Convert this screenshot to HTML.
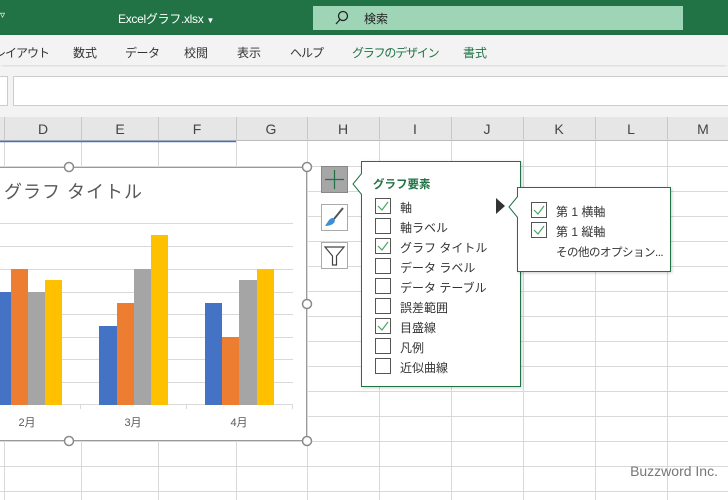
<!DOCTYPE html>
<html><head><meta charset="utf-8"><style>
*{margin:0;padding:0;box-sizing:border-box}
body{width:728px;height:500px;overflow:hidden;position:relative;background:#fff;font-family:"Liberation Sans","Noto Sans CJK JP",sans-serif}
.a{position:absolute}
.t{font-size:12px;color:#333;white-space:nowrap}
.r{font-size:12px;color:#333;white-space:nowrap;position:absolute;top:44px}
.cb{position:absolute;width:16px;height:16px;border:1px solid #555;background:#fff}
</style></head><body>
<div class="a" style="left:0;top:0;width:728px;height:35px;background:#217346"></div>
<div class="a t" style="left:0;top:10px;color:#fff;font-size:10px">▿</div>
<div class="a t" style="left:118px;top:10px;color:#fff;font-size:12px;letter-spacing:-0.3px">Excelグラフ.xlsx <span style="font-size:8px">▼</span></div>
<div class="a" style="left:313px;top:6px;width:370px;height:24px;background:#9fd5b7"></div>
<svg class="a" style="left:335px;top:10px" width="14" height="16"><circle cx="8" cy="6" r="4.5" fill="none" stroke="#222" stroke-width="1.3"/><line x1="5" y1="9.5" x2="1" y2="14" stroke="#222" stroke-width="1.3"/></svg>
<div class="a t" style="left:364px;top:10px;font-size:12px;color:#222">検索</div>
<div class="a" style="left:0;top:35px;width:728px;height:30px;background:#f3f3f3;box-shadow:0 2px 4px rgba(0,0,0,.15)"></div>
<div class="r" style="left:-6px;letter-spacing:-1px">レイアウト</div>
<div class="r" style="left:73px">数式</div>
<div class="r" style="left:125px;letter-spacing:-0.5px">データ</div>
<div class="r" style="left:184px">校閲</div>
<div class="r" style="left:237px">表示</div>
<div class="r" style="left:290px;letter-spacing:-1px">ヘルプ</div>
<div class="r" style="left:352px;color:#217346;letter-spacing:-1.2px">グラフのデザイン</div>
<div class="r" style="left:463px;color:#217346">書式</div>
<div class="a" style="left:0;top:67px;width:728px;height:50px;background:#f3f3f3"></div>
<div class="a" style="left:-2px;top:76px;width:10px;height:30px;background:#fff;border:1px solid #ccc"></div>
<div class="a" style="left:13px;top:76px;width:720px;height:30px;background:#fff;border:1px solid #ccc"></div>
<div class="a" style="left:0;top:117px;width:728px;height:24px;background:#e6e6e6;border-bottom:1px solid #bbb"></div>
<svg class="a" style="left:0;top:117px" width="728" height="383">
<g stroke="#c8c8c8" stroke-width="1">
<line x1="4.5" y1="0" x2="4.5" y2="24"/><line x1="81.5" y1="0" x2="81.5" y2="24"/><line x1="158.5" y1="0" x2="158.5" y2="24"/><line x1="236.5" y1="0" x2="236.5" y2="24"/><line x1="307.5" y1="0" x2="307.5" y2="24"/><line x1="379.5" y1="0" x2="379.5" y2="24"/><line x1="451.5" y1="0" x2="451.5" y2="24"/><line x1="523.5" y1="0" x2="523.5" y2="24"/><line x1="595.5" y1="0" x2="595.5" y2="24"/><line x1="667.5" y1="0" x2="667.5" y2="24"/>
</g>
<g stroke="#d9d9d9" stroke-width="1">
<line x1="4.5" y1="24" x2="4.5" y2="383"/><line x1="81.5" y1="24" x2="81.5" y2="383"/><line x1="158.5" y1="24" x2="158.5" y2="383"/><line x1="236.5" y1="24" x2="236.5" y2="383"/><line x1="307.5" y1="24" x2="307.5" y2="383"/><line x1="379.5" y1="24" x2="379.5" y2="383"/><line x1="451.5" y1="24" x2="451.5" y2="383"/><line x1="523.5" y1="24" x2="523.5" y2="383"/><line x1="595.5" y1="24" x2="595.5" y2="383"/><line x1="667.5" y1="24" x2="667.5" y2="383"/>
<line x1="0" y1="49.5" x2="728" y2="49.5"/><line x1="0" y1="74.5" x2="728" y2="74.5"/><line x1="0" y1="99.5" x2="728" y2="99.5"/><line x1="0" y1="124.5" x2="728" y2="124.5"/><line x1="0" y1="149.5" x2="728" y2="149.5"/><line x1="0" y1="174.5" x2="728" y2="174.5"/><line x1="0" y1="199.5" x2="728" y2="199.5"/><line x1="0" y1="224.5" x2="728" y2="224.5"/><line x1="0" y1="249.5" x2="728" y2="249.5"/><line x1="0" y1="274.5" x2="728" y2="274.5"/><line x1="0" y1="299.5" x2="728" y2="299.5"/><line x1="0" y1="324.5" x2="728" y2="324.5"/><line x1="0" y1="349.5" x2="728" y2="349.5"/><line x1="0" y1="374.5" x2="728" y2="374.5"/>
</g>
<line x1="0" y1="24.5" x2="236" y2="24.5" stroke="#4472c4" stroke-width="1.5"/>
<g font-family="Liberation Sans" font-size="14" fill="#444" text-anchor="middle">
<text x="43" y="17">D</text><text x="120" y="17">E</text><text x="197" y="17">F</text><text x="271" y="17">G</text><text x="343" y="17">H</text><text x="415" y="17">I</text><text x="487" y="17">J</text><text x="559" y="17">K</text><text x="631" y="17">L</text><text x="703" y="17">M</text>
</g>
</svg>
<div class="a" style="left:-5px;top:167px;width:312px;height:274px;background:#fff;border:1px solid #9a9a9a"></div>
<div class="a" style="left:4px;top:178px;font-size:18px;color:#595959;letter-spacing:1px">グラフ タイトル</div>
<svg class="a" style="left:0;top:160px" width="310" height="290">
<g stroke="#d9d9d9"><line x1="0" y1="63.5" x2="293" y2="63.5"/><line x1="0" y1="86.5" x2="293" y2="86.5"/><line x1="0" y1="109.5" x2="293" y2="109.5"/><line x1="0" y1="132.5" x2="293" y2="132.5"/><line x1="0" y1="154.5" x2="293" y2="154.5"/><line x1="0" y1="177.5" x2="293" y2="177.5"/><line x1="0" y1="199.5" x2="293" y2="199.5"/><line x1="0" y1="222.5" x2="293" y2="222.5"/><line x1="0" y1="244.5" x2="293" y2="244.5"/>
<line x1="80.5" y1="244" x2="80.5" y2="249"/><line x1="186.5" y1="244" x2="186.5" y2="249"/><line x1="292.5" y1="244" x2="292.5" y2="249"/></g>
<rect x="0" y="132" width="11" height="113" fill="#4472c4"/><rect x="11" y="109" width="17" height="136" fill="#ed7d31"/><rect x="28" y="132" width="17" height="113" fill="#a5a5a5"/><rect x="45" y="120" width="17" height="125" fill="#ffc000"/>
<rect x="99" y="166" width="18" height="79" fill="#4472c4"/><rect x="117" y="143" width="17" height="102" fill="#ed7d31"/><rect x="134" y="109" width="17" height="136" fill="#a5a5a5"/><rect x="151" y="75" width="17" height="170" fill="#ffc000"/>
<rect x="205" y="143" width="17" height="102" fill="#4472c4"/><rect x="222" y="177" width="17" height="68" fill="#ed7d31"/><rect x="239" y="120" width="18" height="125" fill="#a5a5a5"/><rect x="257" y="109" width="17" height="136" fill="#ffc000"/>
<g font-size="11" fill="#595959" font-family="Liberation Sans,Noto Sans CJK JP,sans-serif" text-anchor="middle"><text x="27" y="266">2月</text><text x="133" y="266">3月</text><text x="239" y="266">4月</text></g>
</svg>
<svg class="a" style="left:0;top:160px" width="320" height="290">
<g fill="#fff" stroke="#8a8a8a" stroke-width="1.5"><circle cx="69" cy="7" r="4.5"/><circle cx="307" cy="7" r="4.5"/><circle cx="307" cy="144" r="4.5"/><circle cx="69" cy="281" r="4.5"/><circle cx="307" cy="281" r="4.5"/></g>
</svg>
<div class="a" style="left:321px;top:166px;width:27px;height:27px;background:#a6a6a6;border:1px solid #888"></div>
<svg class="a" style="left:321px;top:166px" width="27" height="27"><line x1="13.5" y1="4" x2="13.5" y2="23" stroke="#217346" stroke-width="1.2"/><line x1="4" y1="13.5" x2="23" y2="13.5" stroke="#217346" stroke-width="1.2"/></svg>
<div class="a" style="left:321px;top:204px;width:27px;height:27px;background:#fff;border:1px solid #aaa"></div>
<svg class="a" style="left:321px;top:204px" width="27" height="27"><path d="M22 4 L13 15" stroke="#555" stroke-width="2" fill="none"/><path d="M12 14 C8 14 7 18 4 22 C9 22 14 20 14 16 Z" fill="#3a8fd8"/></svg>
<div class="a" style="left:321px;top:242px;width:27px;height:27px;background:#fff;border:1px solid #aaa"></div>
<svg class="a" style="left:321px;top:242px" width="27" height="27"><path d="M4 5 H23 L15.5 14 V23 H11.5 V14 Z" fill="none" stroke="#444" stroke-width="1.2"/></svg>
<div class="a" style="left:361px;top:161px;width:160px;height:226px;background:#fff;border:1px solid #217346;box-shadow:1px 1px 3px rgba(0,0,0,.2)"></div>
<svg class="a" style="left:352px;top:173px" width="11" height="22"><path d="M10 0 L1 11 L10 22" fill="#fff" stroke="#217346"/><rect x="10" y="0" width="2" height="22" fill="#fff"/></svg>
<div class="a t" style="left:373px;top:176px;font-weight:bold;color:#217346;font-size:11.5px">グラフ要素</div>
<div class="cb" style="left:375px;top:198px"></div><div class="a t" style="left:400px;top:199px">軸</div>
<div class="cb" style="left:375px;top:218px"></div><div class="a t" style="left:400px;top:219px">軸ラベル</div>
<div class="cb" style="left:375px;top:238px"></div><div class="a t" style="left:400px;top:239px">グラフ タイトル</div>
<div class="cb" style="left:375px;top:258px"></div><div class="a t" style="left:400px;top:259px">データ ラベル</div>
<div class="cb" style="left:375px;top:278px"></div><div class="a t" style="left:400px;top:279px">データ テーブル</div>
<div class="cb" style="left:375px;top:298px"></div><div class="a t" style="left:400px;top:299px">誤差範囲</div>
<div class="cb" style="left:375px;top:318px"></div><div class="a t" style="left:400px;top:319px">目盛線</div>
<div class="cb" style="left:375px;top:338px"></div><div class="a t" style="left:400px;top:339px">凡例</div>
<div class="cb" style="left:375px;top:358px"></div><div class="a t" style="left:400px;top:359px">近似曲線</div>
<svg class="a" style="left:375px;top:198px" width="16" height="140"><g fill="none" stroke="#4aa564" stroke-width="1.2"><path d="M3 8 L7 12 L13 4"/><path d="M3 48 L7 52 L13 44"/><path d="M3 128 L7 132 L13 124"/></g></svg>
<svg class="a" style="left:496px;top:198px" width="10" height="16"><path d="M0 0 L9 8 L0 16 Z" fill="#333"/></svg>
<div class="a" style="left:517px;top:187px;width:154px;height:85px;background:#fff;border:1px solid #217346;box-shadow:1px 1px 3px rgba(0,0,0,.2)"></div>
<svg class="a" style="left:508px;top:196px" width="11" height="22"><path d="M10 0 L1 11 L10 22" fill="#fff" stroke="#217346"/><rect x="10" y="0" width="2" height="22" fill="#fff"/></svg>
<div class="cb" style="left:531px;top:202px"></div><div class="a t" style="left:556px;top:203px">第 1 横軸</div>
<div class="cb" style="left:531px;top:222px"></div><div class="a t" style="left:556px;top:223px">第 1 縦軸</div>
<div class="a t" style="left:556px;top:244px;font-size:11.5px;letter-spacing:-0.5px">その他のオプション...</div>
<svg class="a" style="left:531px;top:202px" width="16" height="36"><g fill="none" stroke="#4aa564" stroke-width="1.2"><path d="M3 8 L7 12 L13 4"/><path d="M3 28 L7 32 L13 24"/></g></svg>
<div class="a" style="left:610px;top:463px;width:108px;font-size:14px;color:#777;text-align:right">Buzzword Inc.</div>
</body></html>
